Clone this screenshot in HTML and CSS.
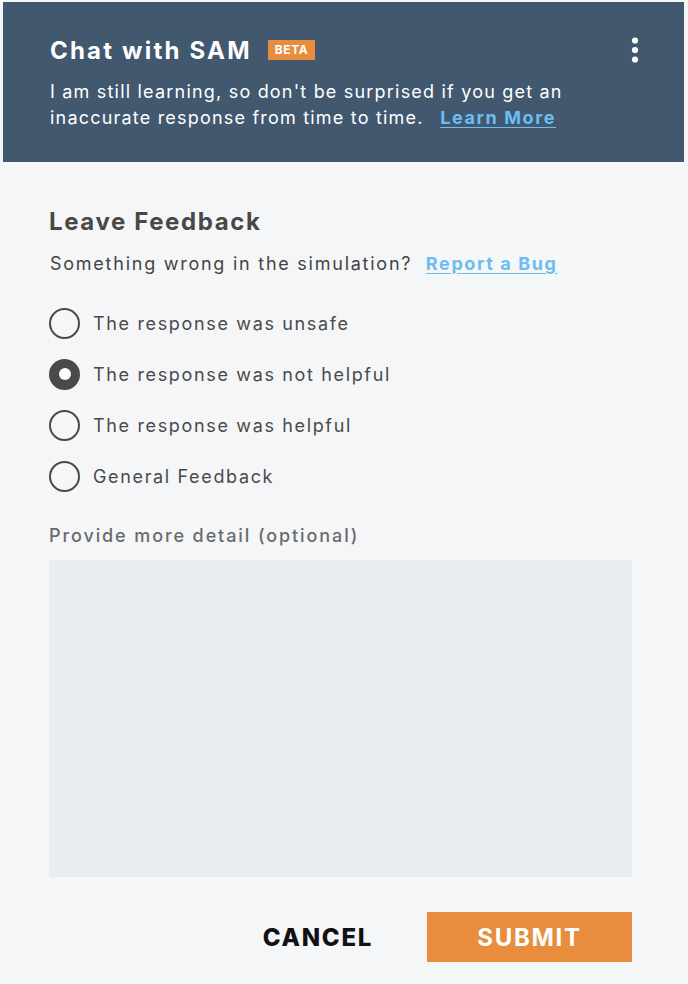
FILE: index.html
```html
<!DOCTYPE html>
<html>
<head>
<meta charset="utf-8">
<link rel="stylesheet" href="styles.css">
</head>
<body>
<div class="panel">
  <header class="head">
    <div class="head-top">
      <h1 class="title">Chat with SAM</h1>
      <span class="badge">BETA</span>
      <button class="kebab" aria-label="More">
        <svg width="8" height="26" viewBox="0 0 8 26"><circle cx="4" cy="3.5" r="3.1" fill="#fff"/><circle cx="4" cy="13" r="3.1" fill="#fff"/><circle cx="4" cy="22.5" r="3.1" fill="#fff"/></svg>
      </button>
    </div>
    <p class="intro">I am still learning, so don't be surprised if you get an inaccurate response from time to time.&nbsp; <a class="link" href="#">Learn More</a></p>
  </header>
  <main class="body">
    <h2 class="section-title">Leave Feedback</h2>
    <p class="bug">Something wrong in the simulation?&nbsp; <a class="link" href="#">Report a Bug</a></p>
    <ul class="options">
      <li class="option"><span class="radio"></span>The response was unsafe</li>
      <li class="option"><span class="radio checked"></span>The response was not helpful</li>
      <li class="option"><span class="radio"></span>The response was helpful</li>
      <li class="option"><span class="radio"></span>General Feedback</li>
    </ul>
    <label class="detail-label">Provide more detail (optional)</label>
    <div class="textarea"></div>
    <div class="actions">
      <button class="cancel">CANCEL</button>
      <button class="submit">SUBMIT</button>
    </div>
  </main>
</div>
</body>
</html>
```
FILE: styles.css
```css
html, body {
  margin: 0;
  padding: 0;
  background: #f5f6f8;
  font-family: Inter, "Open Sans", sans-serif;
}
.panel {
  width: 688px;
  height: 984px;
  box-sizing: border-box;
  padding: 2px 4px 0 3px;
}
.head {
  background: #41586f;
  height: 160px;
  box-sizing: border-box;
  padding: 33px 46px 0 47px;
  color: #fff;
}
.head-top {
  display: flex;
  align-items: center;
  height: 30px;
}
.title {
  margin: 0;
  font-size: 24px;
  font-weight: 700;
  letter-spacing: 2.2px;
}
.badge {
  margin-left: 16px;
  background: #e88d3e;
  color: #fff;
  font-size: 12px;
  font-weight: 700;
  padding: 4px 7px;
  line-height: 12px;
  letter-spacing: 0.6px;
}
.kebab {
  margin-left: auto;
  background: none;
  border: 0;
  padding: 0;
  display: flex;
  margin-right: -1px;
}
.intro {
  margin: 14px 0 0;
  font-size: 18px;
  line-height: 26px;
  letter-spacing: 1.2px;
  color: #fff;
}
.link {
  color: #6dbdf0;
  font-weight: 700;
  text-decoration: underline;
  text-underline-offset: 3px;
}
.intro .link {
  letter-spacing: 1.6px;
  margin-left: 4px;
}
.body {
  padding: 0 52px 0 46px;
}
.section-title {
  margin: 45px 0 0;
  font-size: 24px;
  line-height: 30px;
  font-weight: 700;
  letter-spacing: 1.6px;
  color: #484848;
}
.bug {
  margin: 15px 0 0 1px;
  font-size: 18px;
  line-height: 24px;
  letter-spacing: 1.75px;
  color: #444;
}
.bug .link {
  letter-spacing: 1.6px;
}
.options {
  list-style: none;
  margin: 31px 0 0;
  padding: 0;
}
.option {
  display: flex;
  align-items: center;
  height: 32px;
  margin-bottom: 19px;
  font-size: 18px;
  letter-spacing: 1.65px;
  color: #4a4a4a;
}
.radio {
  width: 27px;
  height: 27px;
  border: 2px solid #4a4a4a;
  border-radius: 50%;
  margin-right: 13px;
  box-sizing: content-box;
  position: relative;
  flex: none;
}
.radio.checked {
  background: #4a4a4a;
}
.radio.checked::after {
  content: "";
  position: absolute;
  left: 50%;
  top: 50%;
  width: 12px;
  height: 12px;
  margin: -6px 0 0 -6px;
  background: #fff;
  border-radius: 50%;
}
.detail-label {
  display: block;
  margin-top: 32px;
  font-size: 18px;
  line-height: 24px;
  font-weight: 500;
  letter-spacing: 1.9px;
  color: #6b6b6b;
}
.textarea {
  margin-top: 12px;
  height: 317px;
  background: #eaedf0;
}
.actions {
  display: flex;
  justify-content: flex-end;
  align-items: center;
  margin-top: 35px;
}
.cancel {
  background: none;
  border: 0;
  font-family: inherit;
  font-size: 24px;
  font-weight: 800;
  letter-spacing: 1.7px;
  color: #111;
  margin-right: 54px;
  padding: 0;
}
.submit {
  width: 205px;
  height: 50px;
  background: #e88d3e;
  border: 0;
  color: #fff;
  font-family: inherit;
  font-size: 24px;
  font-weight: 700;
  letter-spacing: 1.7px;
}
```
